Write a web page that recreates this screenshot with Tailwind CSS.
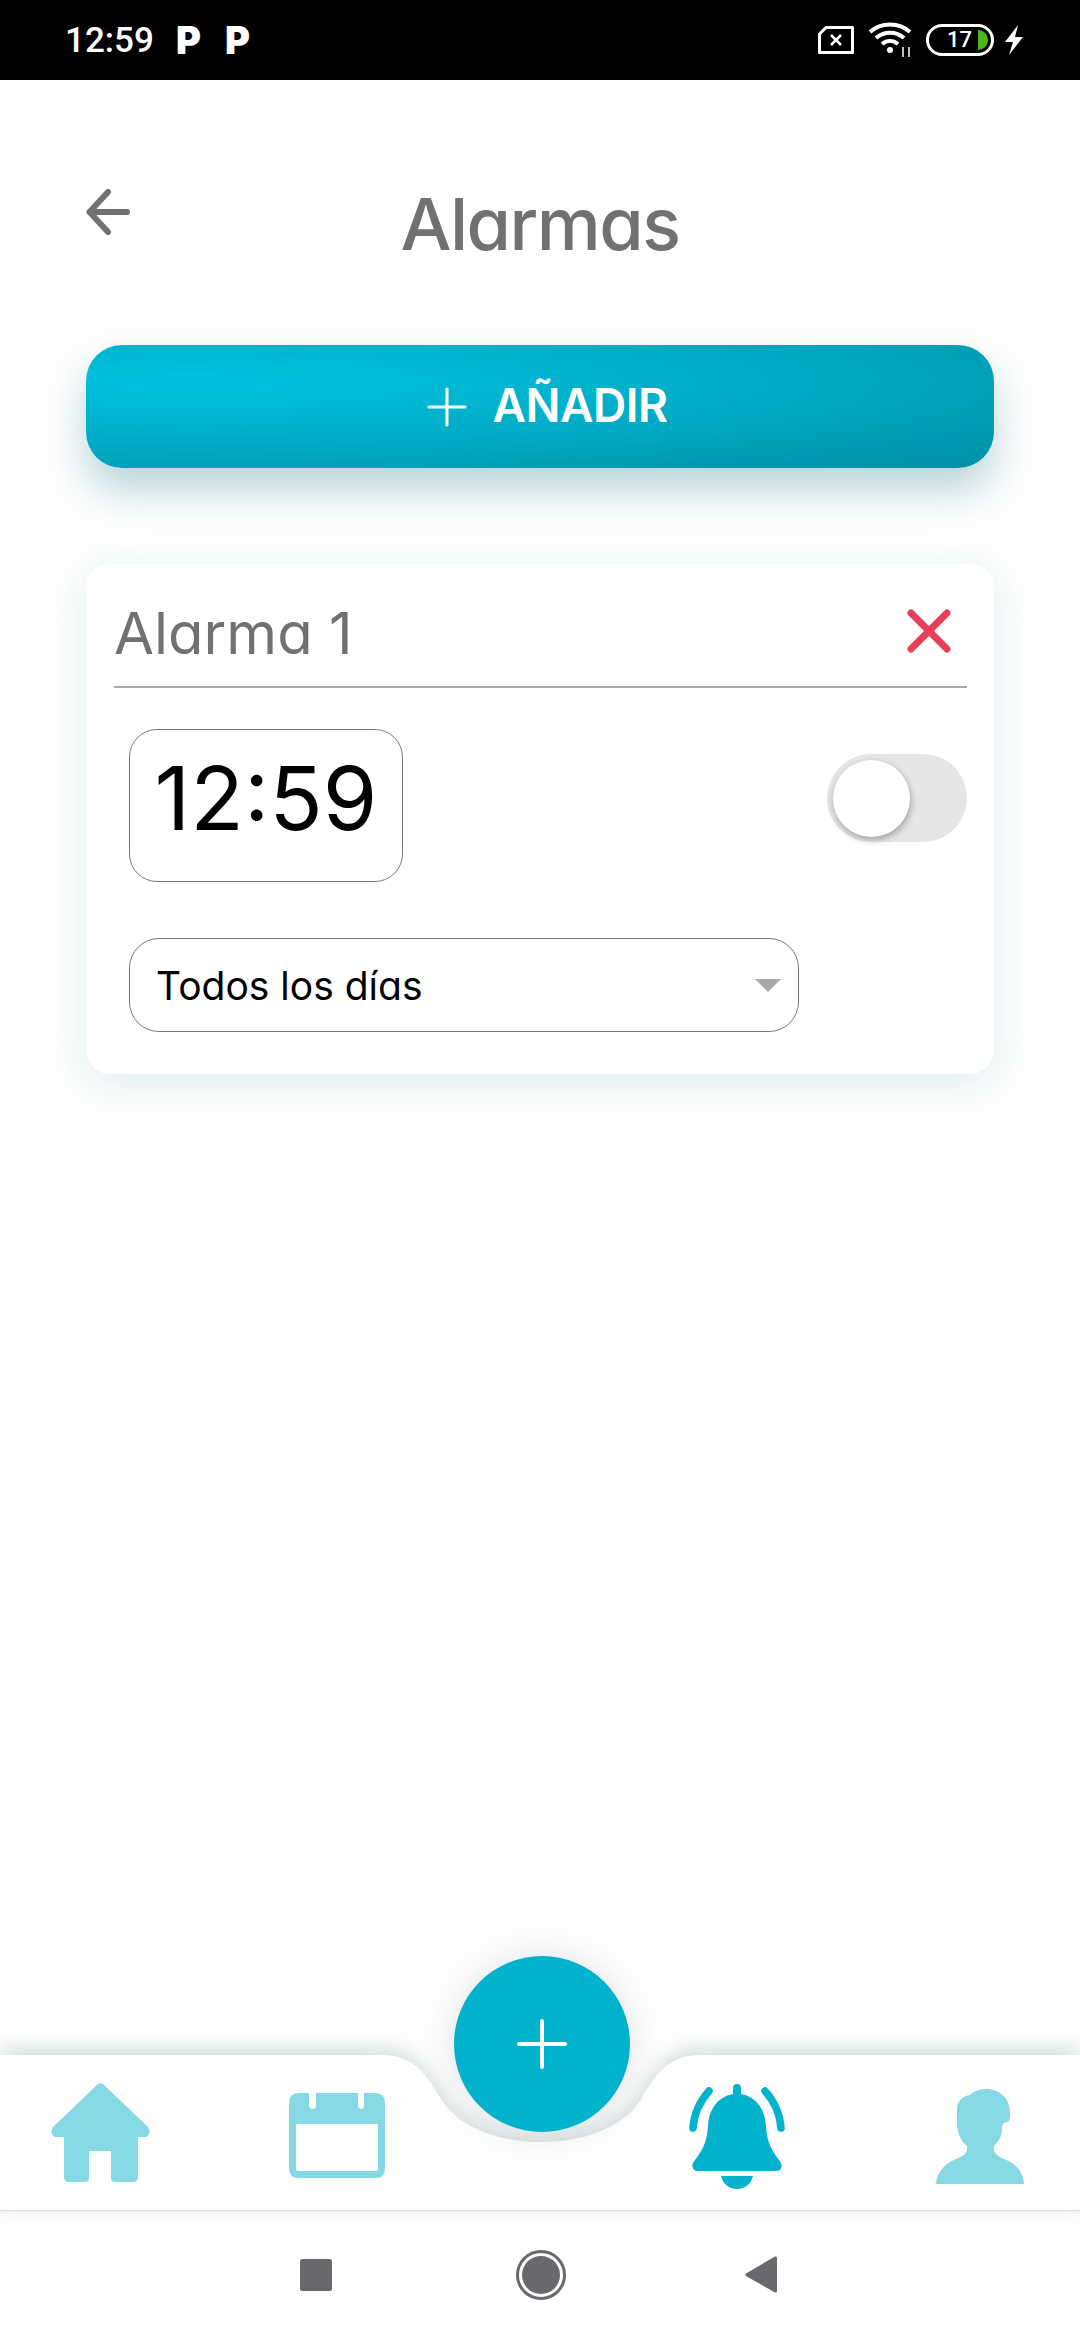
<!DOCTYPE html>
<html lang="es">
<head>
  <meta charset="UTF-8">
  <meta name="viewport" content="width=device-width, initial-scale=1.0">
  <title>Alarmas</title>
  <script src="https://cdn.jsdelivr.net/npm/@tailwindcss/browser@4"></script>
</head>
<body class="bg-[#fefefe]">
  <div class="w-[1080px] h-[2340px] flex flex-col overflow-hidden font-['Inter',sans-serif] [font-feature-settings:'cv11']">

    <!-- status bar -->
    <div class="h-[80px] bg-black flex items-center pl-[65px] pr-[56px] text-white">
      <span class="font-['Roboto',sans-serif] text-[35px] leading-none font-medium w-[111px]">12:59</span>
      <span class="font-['Inter',sans-serif] text-[38px] leading-none font-black w-[49px]">P</span>
      <span class="font-['Inter',sans-serif] text-[38px] leading-none font-black">P</span>
      <div class="ml-auto flex items-center">
        <svg class="w-[36px] h-[28px]" viewBox="0 0 36 28" fill="none" stroke="#fff" stroke-width="3">
          <path d="M8 1.5H34.5V26.5H1.5V8Z" stroke-linejoin="round"/>
          <path d="M13 9L23 19M23 9L13 19" stroke-width="2.5"/>
        </svg>
        <svg class="w-[46px] h-[36px] ml-[14px]" viewBox="0 0 46 36" fill="none" stroke="#fff" stroke-width="4">
          <path d="M2 10C13 0 31 0 42 10"/>
          <path d="M8 16C16 9 28 9 36 16"/>
          <path d="M14 22C19 18 25 18 30 22"/>
          <circle cx="22" cy="28" r="3" fill="#fff" stroke="none"/>
          <path d="M35 25V35M41 25V35" stroke-width="1.5"/>
        </svg>
        <div class="ml-[12px] w-[68px] h-[32px] rounded-full border-[3px] border-white flex items-center pl-[18px] pr-[3px]">
          <span class="font-['Roboto',sans-serif] text-[22px] leading-none font-medium">17</span>
          <span class="ml-auto w-[10px] h-[20px] bg-[#4cb81e] rounded-r-full"></span>
        </div>
        <svg class="w-[20px] h-[30px] ml-[10px]" viewBox="0 0 20 30" fill="#fff"><path d="M14 0L1 17H9L5 30L19 12H11Z"/></svg>
      </div>
    </div>

    <main class="flex-1 px-[86px]">
      <!-- header -->
      <div class="h-[265px] grid grid-cols-[1fr_auto_1fr]">
        <svg class="w-[44px] h-[46px] mt-[109px]" viewBox="0 0 44 46" fill="none" stroke="#717073" stroke-width="6" stroke-linecap="round" stroke-linejoin="round">
          <path d="M22 3L3.500 23L22 43"/><path d="M4 23H41"/>
        </svg>
        <h1 class="text-[72px] leading-none tracking-[-1.5px] text-[#717073] font-medium mt-[108px]">Alarmas</h1>
        <div></div>
      </div>

      <!-- add button -->
      <button class="w-full h-[123px] rounded-[36px] pl-[14px] flex items-center justify-center text-white bg-[radial-gradient(ellipse_at_12%_30%,#00c3de,#00a9c3_55%,#008fa5)] shadow-[0_22px_40px_rgba(0,105,125,0.28)]">
        <svg class="w-[40px] h-[40px]" viewBox="0 0 40 40" stroke="#fff" stroke-width="3" stroke-linecap="round"><path d="M20 2V38M2 20H38"/></svg>
        <span class="ml-[26px] -mt-[4px] text-[46px] leading-none font-semibold tracking-[-0.5px]">AÑADIR</span>
      </button>

      <!-- alarm card -->
      <section class="mt-[96px] h-[510px] rounded-[24px] bg-white pl-[28px] pr-[27px] shadow-[0_8px_44px_rgba(0,125,135,0.13)]">
        <div class="h-[124px] border-b-[2px] border-[#aaaaaa] flex items-start justify-between pr-[16px]">
          <span class="mt-[40px] text-[58px] leading-none text-[#717073]">Alarma 1</span>
          <svg class="mt-[45px] w-[44px] h-[44px]" viewBox="0 0 44 44" stroke="#e6405a" stroke-width="7" stroke-linecap="round"><path d="M4 4L40 40M40 4L4 40"/></svg>
        </div>
        <div class="pl-[15px] mt-[41px] flex items-start justify-between">
          <div class="w-[274px] h-[153px] rounded-[28px] border-[1.5px] border-[#777777] pt-[24px] text-center text-[88px] leading-none text-black">12:59</div>
          <div class="mt-[25px] w-[140px] h-[88px] rounded-full bg-[#e6e6e8] p-[6px]">
            <div class="w-[77px] h-[77px] rounded-full bg-white shadow-[1px_3px_7px_rgba(0,0,0,0.3)]"></div>
          </div>
        </div>
        <div class="ml-[15px] mt-[56px] w-[670px] h-[94px] rounded-[30px] border-[1.5px] border-[#777777] flex items-center pl-[26px] pr-[17px]">
          <span class="text-[39px] leading-none text-black">Todos los días</span>
          <svg class="ml-auto w-[26px] h-[13px]" viewBox="0 0 26 13" fill="#a8a8a8"><path d="M0 0H26L13 13Z"/></svg>
        </div>
      </section>
    </main>

    <!-- bottom nav -->
    <nav class="relative h-[155px] flex items-start">
      <svg class="absolute left-0 top-0 w-[1080px] h-[155px] overflow-visible drop-shadow-[0_-5px_10px_rgba(55,85,90,0.22)]" viewBox="0 0 1080 155" fill="#fefefe">
        <path d="M0 0H382C415 0 428 22 441 44C458 72 498 87 541 87C585 87 622 72 640 46C653 22 668 0 700 0H1080V155H0Z"/>
      </svg>
      <div class="absolute left-[454px] top-[-99px] w-[176px] h-[176px] rounded-full bg-[#00b2cc] flex items-center justify-center shadow-[0_0_34px_rgba(40,60,70,0.14)]">
        <svg class="w-[50px] h-[50px]" viewBox="0 0 50 50" stroke="#fff" stroke-width="4" stroke-linecap="round"><path d="M25 2V48M2 25H48"/></svg>
      </div>

      <!-- home -->
      <svg class="relative ml-[51px] mt-[28px] w-[99px] h-[99px]" viewBox="0 0 99 99" fill="#84d9e5">
        <path fill-rule="evenodd" d="M46.5 1.5Q49.5 -1 52.5 1.5L97 44Q101 50 95 54H87V94Q87 99 82 99H64Q60 99 60 95V68H38V95Q38 99 34 99H18Q13 99 13 94V54H4Q-2 50 2 44Z"/>
      </svg>
      <!-- calendar -->
      <svg class="relative ml-[139px] mt-[38px] w-[96px] h-[85px]" viewBox="0 0 96 85" fill="#84d9e5">
        <path fill-rule="evenodd" d="M10 0H20V14Q23.500 18 27 14V0H69V14Q72 18 75 14V0H86Q96 0 96 10V75Q96 85 86 85H10Q0 85 0 75V10Q0 0 10 0ZM7 31V76Q7 78 9 78H87Q89 78 89 76V31Z"/>
      </svg>
      <!-- bell -->
      <svg class="relative ml-[304px] mt-[29px] w-[96px] h-[105px]" viewBox="0 0 96 105" fill="#00b2cc">
        <path d="M48 0Q52 0 52 4V10C68 13 76 26 77 42C78 60 84 68 90 76C95 82 92 87 87 87H9C4 87 1 82 6 76C12 68 18 60 19 42C20 26 28 13 44 10V4Q44 0 48 0Z"/>
        <path d="M32 92H64C62 100 56 105 48 105C40 105 34 100 32 92Z"/>
        <path d="M20 7C11 17 5 30 4 44M76 7C85 17 91 30 92 44" fill="none" stroke="#00b2cc" stroke-width="7.500" stroke-linecap="round"/>
      </svg>
      <!-- user -->
      <svg class="relative ml-[151px] mt-[34px] w-[88px] h-[95px]" viewBox="0 0 88 95" fill="#84d9e5">
        <path d="M0 95C1 82 10 74 20 70C28 67 32 64 31 57C25 52 21 44 21 34V20C21 12 27 7 34 6C39 1 45 0 51 0C63 0 74 9 74 24C74 28 74 31 72 33C67 33 66 36 66 40C66 47 63 52 58 57C57 64 61 67 68 70C79 74 87 82 88 95Z"/>
      </svg>
    </nav>

    <!-- system nav -->
    <div class="h-[130px] border-t-[1px] border-[#e4e4ea] flex items-center pb-[2px]">
      <span class="ml-[300px] w-[32px] h-[32px] rounded-[2px] bg-[#69686c]"></span>
      <span class="ml-[184px] w-[50px] h-[50px] rounded-full border-[3px] border-[#69686c] p-[3px]">
        <span class="block w-full h-full rounded-full bg-[#69686c]"></span>
      </span>
      <svg class="ml-[179px] w-[32px] h-[37px]" viewBox="0 0 32 37" fill="#69686c"><path d="M30 0.500Q32 0 32 2V35Q32 37 30 36.500L1 20Q0 18.500 1 17.500Z"/></svg>
    </div>
  </div>
</body>
</html>
